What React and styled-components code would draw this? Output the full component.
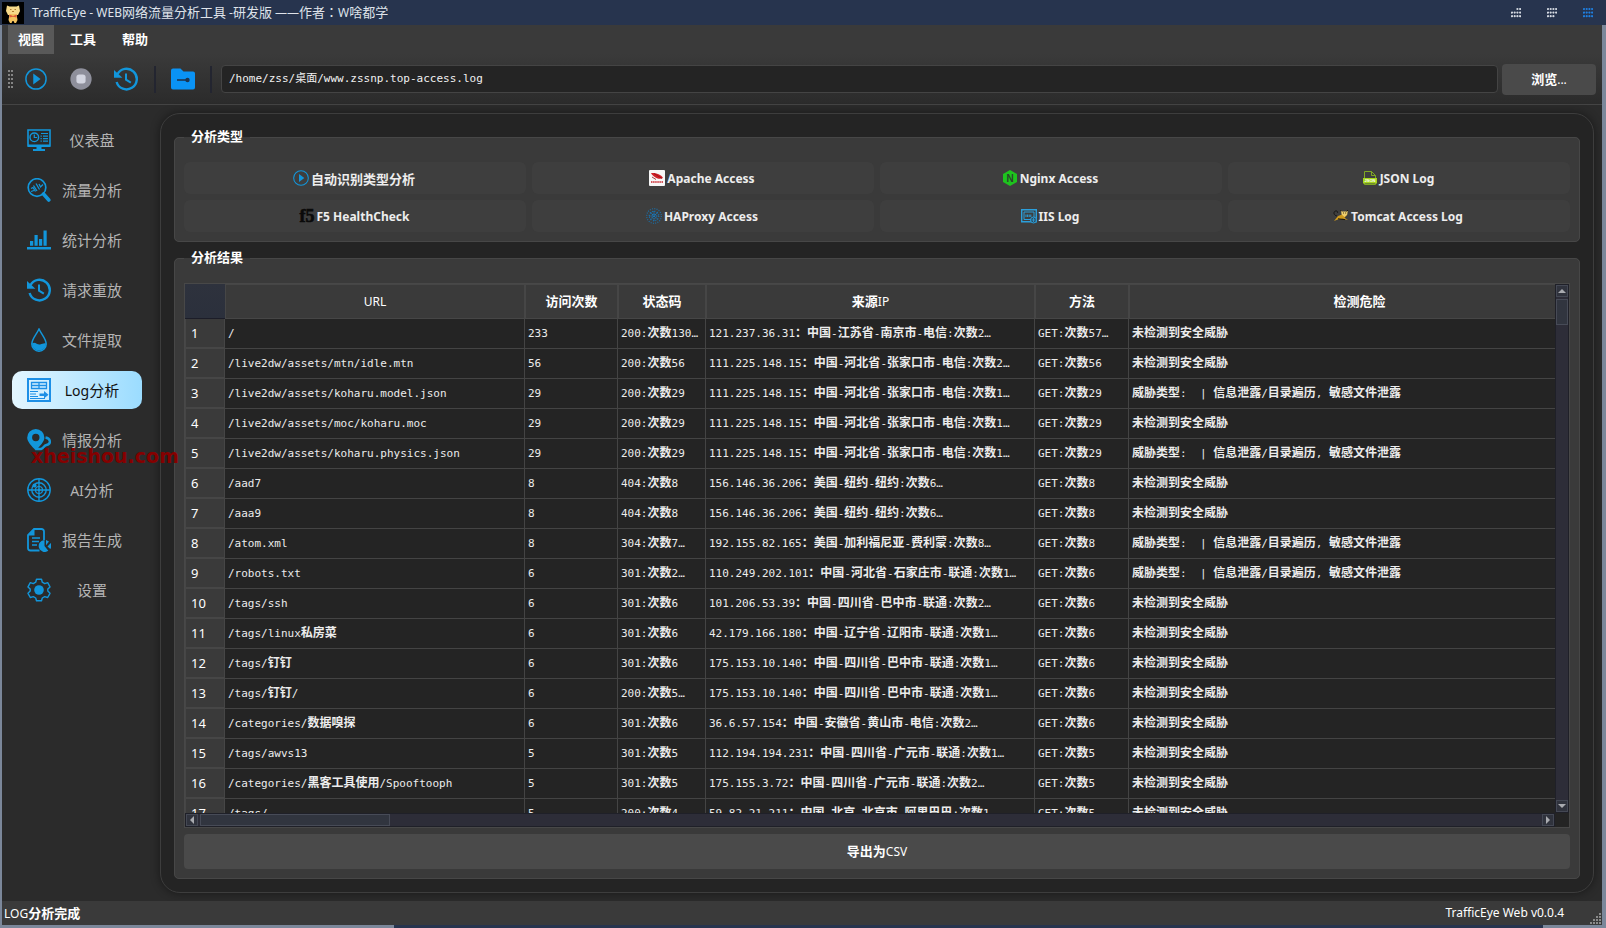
import React from 'react';
import styled, { createGlobalStyle, css } from 'styled-components';

const SANS = `'Noto Sans', 'Noto Sans CJK SC', sans-serif`;
const MONO = `'DejaVu Sans Mono', 'Noto Sans CJK SC', monospace`;
const BLUE = '#1296db';

const GlobalStyle = createGlobalStyle`
  * {
    box-sizing: border-box;
  }
  body {
    margin: 0;
    background: #2b2b2b;
    color: #fff;
    font-family: ${SANS};
    font-size: 12px;
  }
  button {
    border: 0;
    padding: 0;
    background: none;
    color: inherit;
    font: inherit;
  }
`;

const Window = styled.div`
  display: flex;
  flex-direction: column;
  height: 100vh;
  min-height: 560px;
  overflow: hidden;
  position: relative;
`;

const TitleBar = styled.header`
  display: flex;
  align-items: center;
  height: 25px;
  padding: 0 13px 0 2px;
  background: #27344e;
`;

const TitleText = styled.h1`
  flex: 1;
  margin: 0 0 0 8px;
  font-size: 12px;
  line-height: 25px;
  font-weight: 400;
  color: #dfe3ea;

  span {
    font-family: 'Noto Sans CJK TC', sans-serif;
  }
`;

const WindowButtons = styled.div`
  display: flex;
  gap: 26px;
`;

const WindowButton = styled.button`
  display: flex;
  width: 10px;
  height: 14px;
  color: ${(props) => (props.$active ? '#1f7fe0' : '#d5dae2')};
`;

const Frame = styled.div`
  display: flex;
  flex-direction: column;
  flex: 1;
  min-height: 0;
  border-left: 2px solid #7b879a;
  border-right: 4px solid #7b879a;
`;

const MenuBar = styled.nav`
  display: flex;
  gap: 6px;
  height: 29px;
  padding-left: 6px;
  background: #3a3a3a;
`;

const MenuButton = styled.button`
  padding: 0 10px;
  line-height: 29px;
  background: ${(props) => (props.$active ? '#595959' : 'transparent')};
`;

const Toolbar = styled.div`
  display: flex;
  align-items: center;
  height: 51px;
  padding: 0 6px;
  border-bottom: 1px solid #444;
  background: linear-gradient(#3a3a3a, #2b2b2b);
`;

const ToolButton = styled.button`
  display: flex;
  align-items: center;
  justify-content: center;
  width: ${(props) => (props.$narrow ? 42 : 45)}px;
  height: 32px;
`;

const Divider = styled.span`
  width: 2px;
  height: 27px;
  margin: 0 6px;
  background: #232530;
`;

const PathInput = styled.input`
  flex: 1;
  min-width: 0;
  height: 28px;
  margin: 0 4px 0 3px;
  padding: 0 7px 4px;
  border: 1px solid #444;
  border-radius: 4px;
  background: #242424;
  color: #f0f0f0;
  font-family: ${MONO};
  font-size: 11px;
  outline: none;
`;

const BrowseButton = styled.button`
  width: 94px;
  height: 31px;
  border-radius: 4px;
  background: #4a4a4a;
`;

const Body = styled.div`
  display: flex;
  flex: 1;
  min-height: 0;
  padding: 8px 8px 8px 0;
`;

const Sidebar = styled.nav`
  display: flex;
  flex-direction: column;
  gap: 12px;
  width: 158px;
  padding: 8px 18px 0 10px;
`;

const NavItem = styled.button`
  display: flex;
  align-items: center;
  height: 38px;
  padding: 0 9px 0 15px;
  border-radius: 10px;
  color: #b4b4b4;
  font-size: 14px;
  ${(props) =>
    props.$active &&
    css`
      color: #111;
      background: linear-gradient(90deg, #e3f6ff, #9bdcff);
    `}
`;

const NavLabel = styled.span`
  flex: 1;
  text-align: center;
  white-space: nowrap;
`;

const Panel = styled.main`
  display: flex;
  flex-direction: column;
  gap: 8px;
  flex: 1;
  min-width: 0;
  padding: 15px 13px 13px;
  border: 1px solid #3d3d3d;
  border-radius: 20px;
  background: #242424;
  box-shadow: 0 0 10px rgba(0, 0, 0, 0.45);
`;

const Group = styled.fieldset`
  display: flex;
  flex-direction: column;
  gap: 6px;
  flex: ${(props) => (props.$grow ? '1' : 'none')};
  min-width: 0;
  min-height: 0;
  margin: 0;
  padding: 16px 9px 9px;
  border: 1px solid #474747;
  border-radius: 5px;
  background: #3a3a3a;
`;

const Legend = styled.legend`
  padding: 0 7px 3px;
  line-height: 13px;
`;

const TypeGrid = styled.div`
  display: grid;
  grid-template-columns: repeat(4, 1fr);
  gap: 6px;
`;

const TypeButton = styled.button`
  display: flex;
  align-items: center;
  justify-content: center;
  gap: 2px;
  height: 32px;
  padding-right: 2px;
  border-radius: 6px;
  background: #3e3e3e;
  color: #ededed;
  font-weight: 700;
`;

const TableFrame = styled.div`
  display: grid;
  grid-template-columns: minmax(0, 1fr) 14px;
  grid-template-rows: minmax(0, 1fr) 14px;
  flex: 1;
  min-height: 0;
  border: 1px solid #484848;
  background: #242424;
`;

const TableView = styled.div`
  overflow: hidden;
`;

// the last column runs on under the vertical scroll bar
const Table = styled.table`
  width: calc(100% + 35px);
  table-layout: fixed;
  border-collapse: separate;
  border-spacing: 0;
`;

const Col = styled.col`
  width: ${(props) => (props.$w ? `${props.$w}px` : 'auto')};
`;

const HeadCell = styled.th`
  height: 35px;
  padding: 0;
  border: 1px solid #464646;
  background: #3a3a3a;
  font-weight: 400;
`;

const CornerCell = styled.td`
  padding: 0;
  border-bottom: 1px solid #1c1d28;
  background: linear-gradient(#2e323d, #2b303c);
`;

const RowHead = styled.th`
  height: 30px;
  padding: 0 0 0 5px;
  border: solid #464646;
  border-width: 0 1px 2px 1px;
  background: #3a3a3a;
  font-size: 13px;
  line-height: 20px;
  font-weight: 400;
  text-align: left;
`;

const Cell = styled.td`
  height: 30px;
  padding: 0 0 0 3px;
  border-right: 1px solid #444;
  border-bottom: 1px solid #444;
  color: #ececec;
  font-family: ${MONO};
  font-size: 11px;
  line-height: 18px;
  white-space: pre;
  overflow: hidden;
`;

const Cjk = styled.span`
  font-family: 'Noto Sans CJK SC', sans-serif;
  font-size: ${(props) => props.$size}px;
  font-weight: ${(props) => props.$weight};
  line-height: 1;
`;

const ScrollBar = styled.div`
  display: flex;
  flex-direction: ${(props) => (props.$vertical ? 'column' : 'row')};
  border: 1px solid #1f2028;
  background: #2d2d38;
`;

const ScrollTrack = styled.div`
  display: flex;
  flex-direction: inherit;
  flex: 1;
`;

const ScrollThumb = styled.div`
  flex: 0 0 ${(props) => props.$size}px;
  margin: ${(props) => (props.$vertical ? '2px 0 0' : '0 0 0 2px')};
  border: 1px solid #474b57;
  background: #31353f;
`;

const ScrollButton = styled.button`
  display: flex;
  align-items: center;
  justify-content: center;
  flex: 0 0 12px;
  border: 1px solid #444854;
  background: #30333d;
  color: #a9abb0;
`;

const ExportButton = styled.button`
  height: 35px;
  border-radius: 4px;
  background: #4a4a4a;
`;

const StatusBar = styled.footer`
  display: flex;
  align-items: center;
  justify-content: space-between;
  height: 24px;
  padding: 0 0 0 2px;
  background: #3a3a3a;
`;

const StatusRight = styled.span`
  display: flex;
  align-items: flex-end;
  gap: 26px;
  height: 24px;
  line-height: 24px;
`;

const Desktop = styled.div`
  display: flex;
  justify-content: space-between;
  height: 3px;
  background: #27344e;
`;

const DesktopEdge = styled.span`
  width: ${(props) => props.$w}px;
  background: #7b879a;
`;

const Watermark = styled.span`
  position: absolute;
  left: 31px;
  top: 442px;
  color: #850000;
  font-family: 'DejaVu Sans', sans-serif;
  font-size: 19px;
  line-height: 28px;
  font-weight: 700;
  pointer-events: none;
`;

// Chinese runs are set one step larger than the latin text beside them
const Mixed = ({ text, size = 13, weight = 700 }) =>
  text.split(/([\u4e00-\u9fff\uff1a]+)/).map((part, i) =>
    i % 2 ? (
      <Cjk key={i} $size={size} $weight={weight}>
        {part}
      </Cjk>
    ) : (
      part
    )
  );

const Svg = ({ size = 24, box = 24, children, ...rest }) => (
  <svg width={size} height={size} viewBox={`0 0 ${box} ${box}`} fill="none" {...rest}>
    {children}
  </svg>
);

const PlayIcon = ({ size = 22 }) => (
  <Svg size={size}>
    <circle cx="12" cy="12" r="11" stroke={BLUE} strokeWidth="1.6" />
    <path d="M9 6v12l8-6z" fill={BLUE} />
  </Svg>
);

const StopIcon = () => (
  <Svg size={22}>
    <circle cx="12" cy="12" r="11.6" fill="#8e8f9b" />
    <rect x="7" y="7" width="10" height="10" rx="3" fill="#d3d5e0" />
  </Svg>
);

const HistoryIcon = () => (
  <Svg>
    <path d="M3.4 7.2A10.3 10.3 0 1 1 2.6 15" stroke={BLUE} strokeWidth="2.4" />
    <path d="M0 3v7.8h8.4z" fill={BLUE} />
    <path d="M12 6.5v6.2l4.8 3" stroke={BLUE} strokeWidth="2" />
  </Svg>
);

const FolderIcon = () => (
  <Svg>
    <path d="M2 1.5h7.5l3 3H22a2 2 0 0 1 2 2v14a2 2 0 0 1-2 2H2a2 2 0 0 1-2-2v-17a2 2 0 0 1 2-2z" fill="#0a93f5" />
    <path d="M6 13h10" stroke="#1d3550" strokeWidth="1.6" />
    <circle cx="16.5" cy="13" r="2.2" fill="#1d3550" />
  </Svg>
);

const DashboardIcon = () => (
  <Svg>
    <path d="M1 2h22v16H1z" stroke={BLUE} strokeWidth="1.6" />
    <path d="M1 16.5h22v2.5H1zM9.5 19h5v2h-5zM6 21h12v2H6z" fill={BLUE} />
    <circle cx="7.3" cy="9.3" r="4.3" stroke={BLUE} strokeWidth="1.4" />
    <path d="M7.3 6.5v3h2.8M14 5.5h7M16 8.2h5M16 10.7h5M16 13.2h5" stroke={BLUE} strokeWidth="1.2" />
    <path d="M13.5 8.2h1.3M13.5 10.7h1.3M13.5 13.2h1.3" stroke={BLUE} strokeWidth="1.2" />
  </Svg>
);

const TrafficIcon = () => (
  <Svg>
    <circle cx="10" cy="9.5" r="8.8" stroke={BLUE} strokeWidth="1.7" />
    <path d="M16.5 16l5.3 6" stroke={BLUE} strokeWidth="3.6" strokeLinecap="round" />
    <path d="M4 10.5l2-1 2.5 4M6.5 7.5l3.5 5.5M9 5.5l3.5 6M12 6l1.5 3L16 6.5M4 13.5l3-1" stroke={BLUE} strokeWidth="1.3" />
  </Svg>
);

const ChartIcon = () => (
  <Svg>
    <path d="M0 19h24v2.6H0zM3 13h3.2v4.8H3zM7.5 7h3.2v10.8H7.5zM12 11h3.2v6.8H12zM16.5 2.5h3.2v15.3h-3.2z" fill={BLUE} />
  </Svg>
);

const DropIcon = () => (
  <Svg>
    <path d="M12 1c2.5 5.5 7.2 9.7 7.2 15a7.2 7.2 0 0 1-14.4 0C4.8 10.7 9.5 6.5 12 1z" stroke={BLUE} strokeWidth="1.5" />
    <path d="M5 15.5c3-2.5 5 1.5 8 1 2.5-.4 3.5-1.5 6-1a7 7 0 0 1-14 0z" fill={BLUE} />
  </Svg>
);

const LogIcon = () => (
  <Svg>
    <path d="M1 1h22v22H1z" stroke="#1c8fe6" strokeWidth="2" />
    <path d="M4.5 4.5h15v6h-15zM12 4.5v6M4.5 7.5h15" stroke="#1c8fe6" strokeWidth="1.3" />
    <path d="M3 13.5h8M3 16h6M3 18.5h8M3 20.5h15" stroke="#1c8fe6" strokeWidth="1.2" />
    <path d="M12.5 15.5h4.5v-2.5l4.5 3.7-4.5 3.7v-2.4h-4.5z" fill="#1c8fe6" />
  </Svg>
);

const IntelIcon = () => (
  <Svg>
    <path
      fillRule="evenodd"
      d="M8.8 1a8.6 8.6 0 0 1 8.6 8.7c0 4-4.6 8.3-8.6 12.8C4.6 18 .2 13.7.2 9.7A8.6 8.6 0 0 1 8.8 1zm0 4.8a3.7 3.7 0 1 0 0 7.4 3.7 3.7 0 0 0 0-7.4z"
      fill={BLUE}
    />
    <path d="M18.5 9.5c5.5 1 5.8 6.5 1 7.500-3 .6-2.5 3-5.5 4H9" stroke={BLUE} strokeWidth="2.4" />
  </Svg>
);

const AiIcon = () => (
  <Svg>
    <circle cx="12" cy="12" r="11.2" stroke={BLUE} strokeWidth="1.4" />
    <circle cx="12" cy="12" r="7.2" stroke={BLUE} strokeWidth="1.4" />
    <circle cx="12" cy="12" r="3.5" stroke={BLUE} strokeWidth="1.2" />
    <circle cx="12" cy="12" r="1.2" fill={BLUE} />
    <circle cx="7.5" cy="7.5" r="2" fill={BLUE} />
    <path d="M12 1v22M1 12h22" stroke={BLUE} strokeWidth="1.4" />
  </Svg>
);

const ReportIcon = () => (
  <Svg>
    <path d="M12.5 22.5h-9A2.5 2.5 0 0 1 1 20V7l6-6h7.5A2.5 2.5 0 0 1 17 3.5V12" stroke={BLUE} strokeWidth="1.8" />
    <path d="M1 7.5L7.5 1v6.5z" fill={BLUE} />
    <path d="M5 10h8M5 13.5h7M5 17h5" stroke={BLUE} strokeWidth="1.5" />
    <path d="M17.5 12v6l3.8 4.8A6 6 0 1 1 17.5 12z" fill={BLUE} />
    <path d="M19 17.3V12l3 1.5zM20.5 18.5l3.3-3.5a6 6 0 0 1-.5 6z" fill={BLUE} />
  </Svg>
);

const SettingsIcon = () => (
  <Svg>
    <path
      d="M9.5 1.2h5l.8 3 2.4 1.4 3-.9 2.3 4.2-2.2 2.2v2l2.2 2.2-2.3 4.2-3-.9-2.4 1.4-.8 2.8h-5l-.8-2.8-2.4-1.4-3 .9L1 15.3l2.2-2.2v-2L1 8.9l2.3-4.2 3 .9 2.4-1.4z"
      stroke={BLUE}
      strokeWidth="1.4"
      strokeLinejoin="round"
    />
    <circle cx="12" cy="12" r="4.8" fill={BLUE} />
  </Svg>
);

const ApacheIcon = () => (
  <Svg size={16} box={16}>
    <rect width="16" height="16" rx="1" fill="#f7f7f7" />
    <path d="M2 3c4-.5 10 1 12 5C11 9.8 5 8.5 2 3z" fill="#d22128" />
    <path d="M3 7l4 2.5M5 3.5l8 5" stroke="#8f1016" strokeWidth=".8" />
    <path d="M2 12h12" stroke="#d4545a" strokeWidth="2" strokeDasharray="1.5 .6" />
  </Svg>
);

const NginxIcon = () => (
  <Svg size={16} box={16}>
    <path d="M8 0l7 4v8l-7 4-7-4V4z" fill="#1ec31e" />
    <text x="8" y="11.5" textAnchor="middle" fontFamily="Liberation Sans" fontSize="10" fontWeight="700" fill="#29452a">
      N
    </text>
  </Svg>
);

const JsonIcon = () => (
  <Svg size={16} box={16}>
    <path d="M2.5 8V1.5h7l4 4V8M9.5 1.5v4h4M2.5 13v1.5h11V13" stroke="#7fa823" />
    <rect x="1" y="8" width="14" height="5.5" fill="#a5d61d" />
    <text x="8" y="12.2" textAnchor="middle" fontFamily="Liberation Sans" fontSize="4" fontWeight="700" fill="#fff">
      JSON
    </text>
  </Svg>
);

const F5Icon = () => (
  <Svg size={16} box={16} overflow="visible">
    <text
      x="8"
      y="14"
      textAnchor="middle"
      fontFamily="Liberation Serif"
      fontSize="18"
      fontWeight="700"
      fill="#0a0a0a"
      stroke="#0a0a0a"
      strokeWidth=".6"
    >
      f5
    </text>
  </Svg>
);

const HaproxyIcon = () => (
  <Svg size={16} box={16}>
    <circle cx="8" cy="8" r="7.3" stroke="#1b6fa8" strokeWidth="1.2" strokeDasharray="1 1.3" />
    <circle cx="8" cy="8" r="4.8" stroke="#1b6fa8" strokeWidth="1.2" strokeDasharray="1 1.5" />
    <path d="M8 3v10M3 8h10M4.5 4.5l7 7M11.5 4.5l-7 7" stroke="#147cc4" strokeWidth="1.1" strokeDasharray="1.5 .8" />
  </Svg>
);

const IisIcon = () => (
  <Svg size={16} box={16}>
    <path d="M.7 1.7h14.6v12H.7z" stroke="#2b9fdb" strokeWidth="1.4" />
    <path d="M3 4h10v7.5H3z" stroke="#2b9fdb" />
    <path d="M4.5 7.7h6" stroke="#2b9fdb" strokeWidth="2.4" strokeDasharray="1 .6" />
    <circle cx="12.5" cy="12" r="3" fill="#2f4b5c" stroke="#2b9fdb" />
    <path d="M10.5 12h4M12.5 10v4" stroke="#2b9fdb" strokeWidth=".8" />
  </Svg>
);

const TomcatIcon = () => (
  <Svg size={16} box={16}>
    <path d="M4 8C1 7.5 0 4.5 2 3.2c1.5-1 3 .3 2.6 1.6" stroke="#161616" />
    <path d="M1 13l4-5 4-1.5 5 .5-2.5 2.8L15 12l-5-1.2-4.5.4z" fill="#cf9a1c" />
    <path d="M8 2.5l2 1h2.7l2-1-.4 4L11.5 9 8.6 6.5z" fill="#efcf6d" />
    <path d="M7.5 2l1.5 1.5M15 2l-1.5 1.5M5 10.8l7 .8M10 5h.8M12.3 5h.8" stroke="#20190a" />
  </Svg>
);

const CatLogo = () => (
  <Svg size={22} box={22}>
    <rect width="22" height="22" fill="#000" />
    <path d="M5 3.5l2.5 1h7l2.5-1 1 5.5-2 4h-10l-2-4z" fill="#f6d98a" />
    <path d="M7.5 12h7l1 6-1.5 3h-1.5l-1-2h-1l-1 2H8l-1.5-3z" fill="#f3c25f" />
    <path d="M7.5 12.5l3.5 1.5 3.5-1.5v3L11 14.8l-3.5.7z" fill="#df5a3c" />
    <path d="M8 7.5h1.5M12.5 7.5H14M10 9.5h2" stroke="#b07a30" />
  </Svg>
);

const Dots = ({ pattern, size = 10 }) => (
  <svg width={size} height="14" viewBox="0 0 10 14" fill="currentColor">
    {pattern.map(([x, y]) => (
      <circle key={`${x}-${y}`} cx={1 + x * 2.7} cy={3 + y * 3.6} r="1.1" />
    ))}
  </svg>
);

const allDots = [0, 1, 2].flatMap((y) => [0, 1, 2, 3].map((x) => [x, y]));
const minimizeDots = allDots.filter(([x, y]) => x + y * 2 > 1);
const maximizeDots = allDots.filter(([x, y]) => x + y < 5);

const Grip = () => (
  <svg width="5" height="18" viewBox="0 0 5 18" fill="#858585">
    {[0, 1, 2, 3, 4].map((n) => (
      <path key={n} d={`M0 ${n * 4}h2v2H0zM3 ${n * 4}h2v2H3z`} />
    ))}
  </svg>
);

const SizeGrip = () => (
  <svg width="12" height="12" viewBox="0 0 12 12" fill="#8a8a8a">
    <path d="M9 0h2v2H9zM6 3h2v2H6zM9 3h2v2H9zM3 6h2v2H3zM6 6h2v2H6zM9 6h2v2H9zM0 9h2v2H0zM3 9h2v2H3zM6 9h2v2H6zM9 9h2v2H9z" />
  </svg>
);

const arrowPaths = {
  up: 'M0 6l4-4 4 4z',
  down: 'M0 2l4 4 4-4z',
  left: 'M6 0L2 4l4 4z',
  right: 'M2 0l4 4-4 4z',
};

const Arrow = ({ dir }) => (
  <svg width="8" height="8" viewBox="0 0 8 8" fill="currentColor">
    <path d={arrowPaths[dir]} />
  </svg>
);

const navItems = [
  ['仪表盘', DashboardIcon],
  ['流量分析', TrafficIcon],
  ['统计分析', ChartIcon],
  ['请求重放', HistoryIcon],
  ['文件提取', DropIcon],
  ['Log分析', LogIcon],
  ['情报分析', IntelIcon],
  ['AI分析', AiIcon],
  ['报告生成', ReportIcon],
  ['设置', SettingsIcon],
];

const analysisTypes = [
  ['自动识别类型分析', () => <PlayIcon size={16} />],
  ['Apache Access', ApacheIcon],
  ['Nginx Access', NginxIcon],
  ['JSON Log', JsonIcon],
  ['F5 HealthCheck', F5Icon],
  ['HAProxy Access', HaproxyIcon],
  ['IIS Log', IisIcon],
  ['Tomcat Access Log', TomcatIcon],
];

const columns = [
  ['URL', 300],
  ['访问次数', 93],
  ['状态码', 88],
  ['来源IP', 329],
  ['方法', 94],
  ['检测危险', 0],
];

const SAFE = '未检测到安全威胁';
const LEAK = '威胁类型:  | 信息泄露/目录遍历, 敏感文件泄露';

const rows = [
  ['/', '233', '200:次数130…', '121.237.36.31：中国-江苏省-南京市-电信:次数2…', 'GET:次数57…', SAFE],
  ['/live2dw/assets/mtn/idle.mtn', '56', '200:次数56', '111.225.148.15：中国-河北省-张家口市-电信:次数2…', 'GET:次数56', SAFE],
  ['/live2dw/assets/koharu.model.json', '29', '200:次数29', '111.225.148.15：中国-河北省-张家口市-电信:次数1…', 'GET:次数29', LEAK],
  ['/live2dw/assets/moc/koharu.moc', '29', '200:次数29', '111.225.148.15：中国-河北省-张家口市-电信:次数1…', 'GET:次数29', SAFE],
  ['/live2dw/assets/koharu.physics.json', '29', '200:次数29', '111.225.148.15：中国-河北省-张家口市-电信:次数1…', 'GET:次数29', LEAK],
  ['/aad7', '8', '404:次数8', '156.146.36.206：美国-纽约-纽约:次数6…', 'GET:次数8', SAFE],
  ['/aaa9', '8', '404:次数8', '156.146.36.206：美国-纽约-纽约:次数6…', 'GET:次数8', SAFE],
  ['/atom.xml', '8', '304:次数7…', '192.155.82.165：美国-加利福尼亚-费利蒙:次数8…', 'GET:次数8', LEAK],
  ['/robots.txt', '6', '301:次数2…', '110.249.202.101：中国-河北省-石家庄市-联通:次数1…', 'GET:次数6', LEAK],
  ['/tags/ssh', '6', '301:次数6', '101.206.53.39：中国-四川省-巴中市-联通:次数2…', 'GET:次数6', SAFE],
  ['/tags/linux私房菜', '6', '301:次数6', '42.179.166.180：中国-辽宁省-辽阳市-联通:次数1…', 'GET:次数6', SAFE],
  ['/tags/钉钉', '6', '301:次数6', '175.153.10.140：中国-四川省-巴中市-联通:次数1…', 'GET:次数6', SAFE],
  ['/tags/钉钉/', '6', '200:次数5…', '175.153.10.140：中国-四川省-巴中市-联通:次数1…', 'GET:次数6', SAFE],
  ['/categories/数据嗅探', '6', '301:次数6', '36.6.57.154：中国-安徽省-黄山市-电信:次数2…', 'GET:次数6', SAFE],
  ['/tags/awvs13', '5', '301:次数5', '112.194.194.231：中国-四川省-广元市-联通:次数1…', 'GET:次数5', SAFE],
  ['/categories/黑客工具使用/Spooftooph', '5', '301:次数5', '175.155.3.72：中国-四川省-广元市-联通:次数2…', 'GET:次数5', SAFE],
  ['/tags/', '5', '200:次数4', '59.82.21.211：中国-北京-北京市-阿里巴巴:次数1', 'GET:次数5', SAFE],
];

const ResultTable = () => (
  <TableFrame>
    <TableView>
      <Table>
        <colgroup>
          <Col $w={40} />
          {columns.map(([name, width]) => (
            <Col key={name} $w={width} />
          ))}
        </colgroup>
        <thead>
          <tr>
            <CornerCell />
            {columns.map(([name]) => (
              <HeadCell key={name} scope="col">
                <Mixed text={name} />
              </HeadCell>
            ))}
          </tr>
        </thead>
        <tbody>
          {rows.map((row, i) => (
            <tr key={i}>
              <RowHead scope="row">{i + 1}</RowHead>
              {row.map((value, n) => (
                <Cell key={n}>
                  <Mixed text={value} size={12} />
                </Cell>
              ))}
            </tr>
          ))}
        </tbody>
      </Table>
    </TableView>
    <ScrollBar $vertical>
      <ScrollButton aria-label="up">
        <Arrow dir="up" />
      </ScrollButton>
      <ScrollTrack>
        <ScrollThumb $vertical $size={26} />
      </ScrollTrack>
      <ScrollButton aria-label="down">
        <Arrow dir="down" />
      </ScrollButton>
    </ScrollBar>
    <ScrollBar>
      <ScrollButton aria-label="left">
        <Arrow dir="left" />
      </ScrollButton>
      <ScrollTrack>
        <ScrollThumb $size={190} />
      </ScrollTrack>
      <ScrollButton aria-label="right">
        <Arrow dir="right" />
      </ScrollButton>
    </ScrollBar>
  </TableFrame>
);

const App = () => {
  return (
    <Window>
      <GlobalStyle />
      <TitleBar>
        <CatLogo />
        <TitleText>
          <Mixed text="TrafficEye - WEB网络流量分析工具 -研发版 ——作者：W啥都学" weight={400} />
        </TitleText>
        <WindowButtons>
          <WindowButton aria-label="minimize">
            <Dots pattern={minimizeDots} />
          </WindowButton>
          <WindowButton aria-label="maximize">
            <Dots pattern={maximizeDots} />
          </WindowButton>
          <WindowButton aria-label="close" $active>
            <Dots pattern={allDots} />
          </WindowButton>
        </WindowButtons>
      </TitleBar>
      <Frame>
        <MenuBar>
          {['视图', '工具', '帮助'].map((name, i) => (
            <MenuButton key={name} $active={i === 0}>
              <Mixed text={name} />
            </MenuButton>
          ))}
        </MenuBar>
        <Toolbar>
          <Grip />
          <ToolButton aria-label="start">
            <PlayIcon />
          </ToolButton>
          <ToolButton aria-label="stop">
            <StopIcon />
          </ToolButton>
          <ToolButton aria-label="replay">
            <HistoryIcon />
          </ToolButton>
          <Divider />
          <ToolButton aria-label="open" $narrow>
            <FolderIcon />
          </ToolButton>
          <Divider />
          <PathInput aria-label="path" defaultValue="/home/zss/桌面/www.zssnp.top-access.log" />
          <BrowseButton>
            <Mixed text="浏览..." />
          </BrowseButton>
        </Toolbar>
        <Body>
          <Sidebar>
            {navItems.map(([name, Icon]) => (
              <NavItem key={name} $active={name === 'Log分析'}>
                <Icon />
                <NavLabel>
                  <Mixed text={name} size={15} weight={400} />
                </NavLabel>
              </NavItem>
            ))}
          </Sidebar>
          <Panel>
            <Group>
              <Legend>
                <Mixed text="分析类型" />
              </Legend>
              <TypeGrid>
                {analysisTypes.map(([name, Icon]) => (
                  <TypeButton key={name}>
                    <Icon />
                    <Mixed text={name} />
                  </TypeButton>
                ))}
              </TypeGrid>
            </Group>
            <Group $grow>
              <Legend>
                <Mixed text="分析结果" />
              </Legend>
              <ResultTable />
              <ExportButton>
                <Mixed text="导出为CSV" />
              </ExportButton>
            </Group>
          </Panel>
        </Body>
        <StatusBar>
          <span>
            <Mixed text="LOG分析完成" />
          </span>
          <StatusRight>
            TrafficEye Web v0.0.4
            <SizeGrip />
          </StatusRight>
        </StatusBar>
      </Frame>
      <Desktop>
        <DesktopEdge $w={394} />
        <DesktopEdge $w={63} />
      </Desktop>
      <Watermark>xheishou.com</Watermark>
    </Window>
  );
};

export default App;
